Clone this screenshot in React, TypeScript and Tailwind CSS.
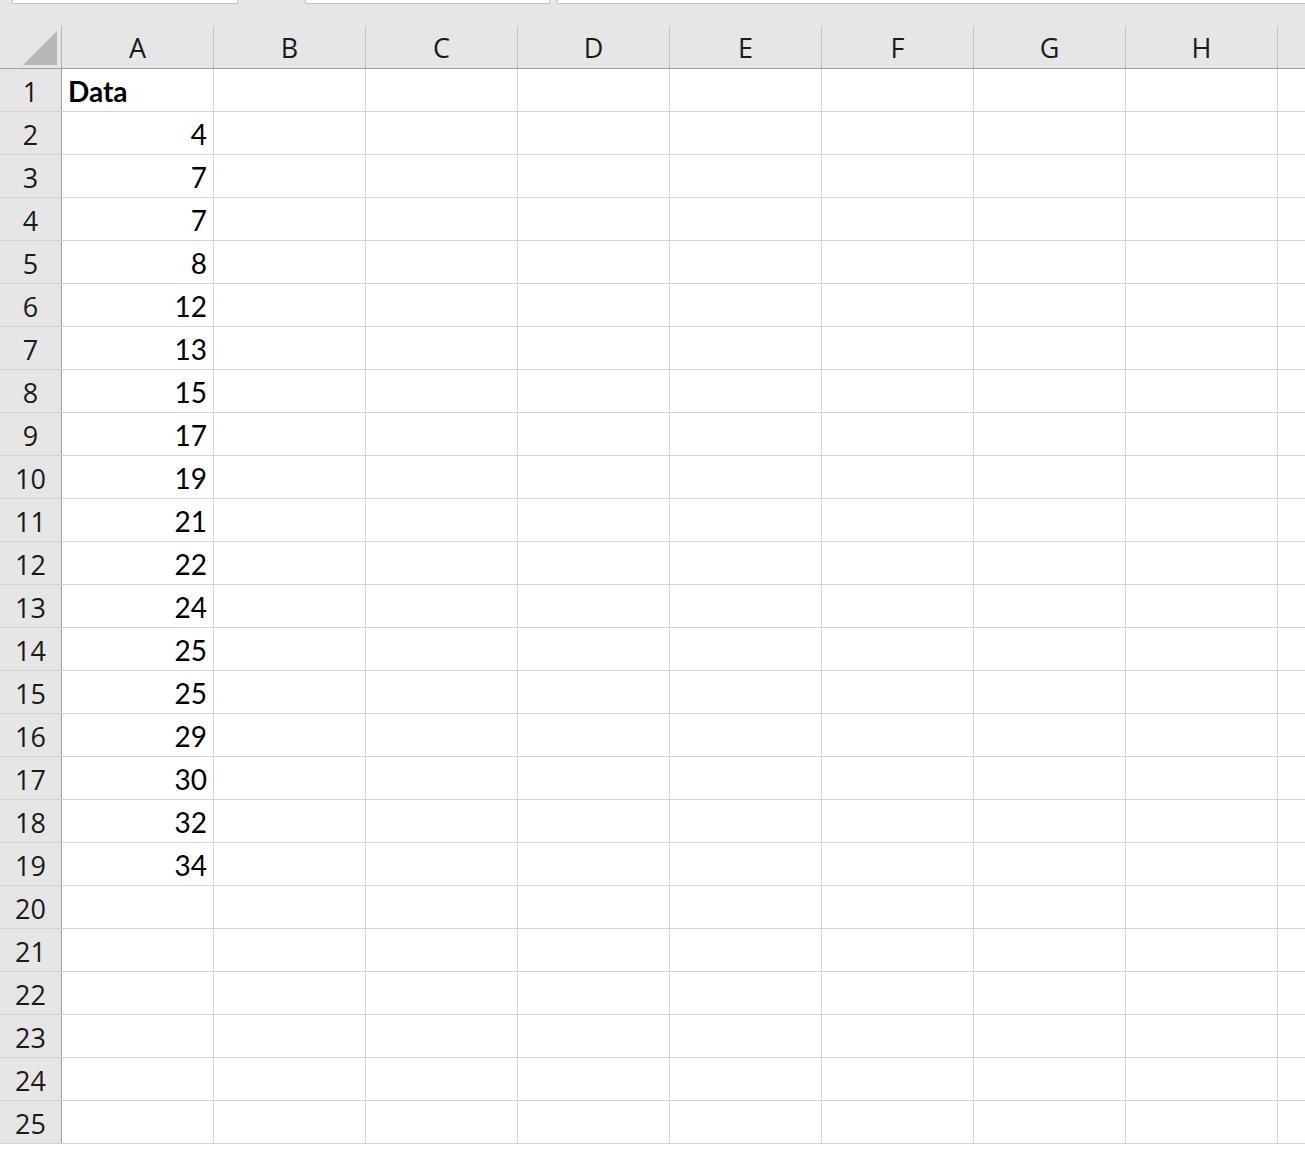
import React from "react";

const columns = ["A", "B", "C", "D", "E", "F", "G", "H"];
const values: (number | null)[] = [4, 7, 7, 8, 12, 13, 15, 17, 19, 21, 22, 24, 25, 25, 29, 30, 32, 34];

function HeaderRow() {
  return (
    <div className="flex h-[43px] border-b border-[#9f9f9f] bg-[#e6e6e6]">
      {/* select-all corner */}
      <div className="w-[62px] shrink-0 border-r border-[#b5b5b5] flex items-end justify-end pr-[3px] pb-[2px]">
        <svg width="36" height="36" viewBox="0 0 36 36">
          <polygon points="35,1 35,35 1,35" fill="#b6b6b6" />
        </svg>
      </div>
      {columns.map((c) => (
        <div
          key={c}
          className="w-[152px] shrink-0 border-r border-[#c4c4c4] flex items-center justify-center text-[27px] text-[#1a1a1a] pt-[3px]"
          style={{ fontFamily: '"Open Sans", "Noto Sans", sans-serif' }}
        >
          {c}
        </div>
      ))}
      <div className="flex-1" />
    </div>
  );
}

function Row({ n, children, bold }: { n: number; children?: React.ReactNode; bold?: boolean }) {
  return (
    <div className="flex h-[43px] border-b border-[#d4d4d4]">
      <div
        className="w-[62px] shrink-0 bg-[#e6e6e6] border-r border-[#9f9f9f] flex items-center justify-center text-[27px] text-[#1a1a1a] pt-[4px]"
        style={{ fontFamily: '"Open Sans", "Noto Sans", sans-serif' }}
      >
        {n}
      </div>
      <div
        className={`w-[152px] shrink-0 border-r border-[#d4d4d4] flex items-center text-[28px] text-black pt-[2px] ${
          bold ? "justify-start pl-[6px] font-bold" : "justify-end pr-[6px]"
        }`}
      >
        {children}
      </div>
      {columns.slice(1).map((c) => (
        <div key={c} className="w-[152px] shrink-0 border-r border-[#d4d4d4]" />
      ))}
      <div className="flex-1" />
    </div>
  );
}

export default function App() {
  const rows = Array.from({ length: 25 }, (_, i) => i + 1);
  return (
    <div
      className="w-[1305px] h-[1150px] overflow-hidden bg-white"
      style={{ fontFamily: 'Lato, "Noto Sans", sans-serif' }}
    >
      {/* ribbon remnants */}
      <div className="h-[26px] bg-[#e6e6e6] flex items-start">
        <div className="ml-[12px] w-[226px] h-[4px] bg-white border-x border-b border-[#c6c6c6]" />
        <div className="ml-[67px] w-[245px] h-[4px] bg-white border-x border-b border-[#c6c6c6]" />
        <div className="ml-[7px] flex-1 h-[4px] bg-white border-l border-b border-[#c6c6c6]" />
      </div>

      <HeaderRow />

      {rows.map((n) =>
        n === 1 ? (
          <Row key={n} n={n} bold>
            Data
          </Row>
        ) : (
          <Row key={n} n={n}>
            {values[n - 2] ?? null}
          </Row>
        )
      )}
    </div>
  );
}
